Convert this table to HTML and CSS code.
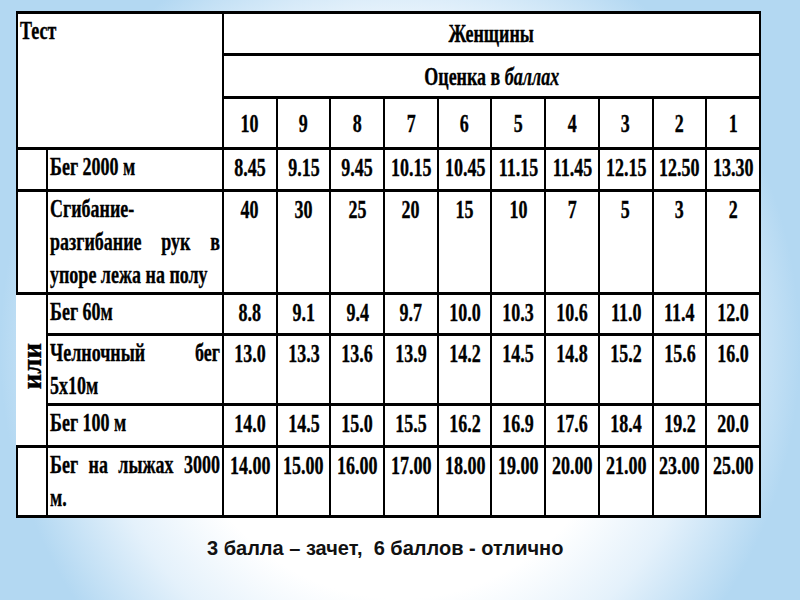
FILE: index.html
```html
<!DOCTYPE html>
<html lang="ru">
<head>
<meta charset="utf-8">
<title>Нормативы</title>
<link rel="stylesheet" href="styles.css">
</head>
<body>
<main class="slide">
  <table class="norms">
    <colgroup>
      <col class="c-or"><col class="c-name">
      <col class="c-val"><col class="c-val"><col class="c-val"><col class="c-val"><col class="c-val">
      <col class="c-val"><col class="c-val"><col class="c-val"><col class="c-val"><col class="c-val">
    </colgroup>
    <tr class="r-h1">
      <td class="test" colspan="2" rowspan="3"><div class="sq"><div>Тест</div></div></td>
      <td class="hd" colspan="10"><div class="ctr"><span class="c">Женщины</span></div></td>
    </tr>
    <tr class="r-h2">
      <td class="hd" colspan="10"><div class="ctr"><span class="c">Оценка в <i>баллах</i></span></div></td>
    </tr>
    <tr class="r-h3 pts">
      <td><div class="ctr"><span class="c">10</span></div></td>
      <td><div class="ctr"><span class="c">9</span></div></td>
      <td><div class="ctr"><span class="c">8</span></div></td>
      <td><div class="ctr"><span class="c">7</span></div></td>
      <td><div class="ctr"><span class="c">6</span></div></td>
      <td><div class="ctr"><span class="c">5</span></div></td>
      <td><div class="ctr"><span class="c">4</span></div></td>
      <td><div class="ctr"><span class="c">3</span></div></td>
      <td><div class="ctr"><span class="c">2</span></div></td>
      <td><div class="ctr"><span class="c">1</span></div></td>
    </tr>
    <tr class="r-1">
      <td class="side"></td>
      <td class="nm"><div class="sq"><div>Бег 2000 м</div></div></td>
      <td><div class="ctr"><span class="c">8.45</span></div></td>
      <td><div class="ctr"><span class="c">9.15</span></div></td>
      <td><div class="ctr"><span class="c">9.45</span></div></td>
      <td><div class="ctr"><span class="c">10.15</span></div></td>
      <td><div class="ctr"><span class="c">10.45</span></div></td>
      <td><div class="ctr"><span class="c">11.15</span></div></td>
      <td><div class="ctr"><span class="c">11.45</span></div></td>
      <td><div class="ctr"><span class="c">12.15</span></div></td>
      <td><div class="ctr"><span class="c">12.50</span></div></td>
      <td><div class="ctr"><span class="c">13.30</span></div></td>
    </tr>
    <tr class="r-2">
      <td class="side"></td>
      <td class="nm"><div class="sq"><div>Сгибание-</div><div class="j">разгибание рук в</div><div>упоре лежа на полу</div></div></td>
      <td><div class="ctr"><span class="c">40</span></div></td>
      <td><div class="ctr"><span class="c">30</span></div></td>
      <td><div class="ctr"><span class="c">25</span></div></td>
      <td><div class="ctr"><span class="c">20</span></div></td>
      <td><div class="ctr"><span class="c">15</span></div></td>
      <td><div class="ctr"><span class="c">10</span></div></td>
      <td><div class="ctr"><span class="c">7</span></div></td>
      <td><div class="ctr"><span class="c">5</span></div></td>
      <td><div class="ctr"><span class="c">3</span></div></td>
      <td><div class="ctr"><span class="c">2</span></div></td>
    </tr>
    <tr class="r-3">
      <td class="side ili" rowspan="3"><span class="vert">или</span></td>
      <td class="nm"><div class="sq"><div>Бег 60м</div></div></td>
      <td><div class="ctr"><span class="c">8.8</span></div></td>
      <td><div class="ctr"><span class="c">9.1</span></div></td>
      <td><div class="ctr"><span class="c">9.4</span></div></td>
      <td><div class="ctr"><span class="c">9.7</span></div></td>
      <td><div class="ctr"><span class="c">10.0</span></div></td>
      <td><div class="ctr"><span class="c">10.3</span></div></td>
      <td><div class="ctr"><span class="c">10.6</span></div></td>
      <td><div class="ctr"><span class="c">11.0</span></div></td>
      <td><div class="ctr"><span class="c">11.4</span></div></td>
      <td><div class="ctr"><span class="c">12.0</span></div></td>
    </tr>
    <tr class="r-4">
      <td class="nm"><div class="sq"><div class="j">Челночный бег</div><div>5х10м</div></div></td>
      <td><div class="ctr"><span class="c">13.0</span></div></td>
      <td><div class="ctr"><span class="c">13.3</span></div></td>
      <td><div class="ctr"><span class="c">13.6</span></div></td>
      <td><div class="ctr"><span class="c">13.9</span></div></td>
      <td><div class="ctr"><span class="c">14.2</span></div></td>
      <td><div class="ctr"><span class="c">14.5</span></div></td>
      <td><div class="ctr"><span class="c">14.8</span></div></td>
      <td><div class="ctr"><span class="c">15.2</span></div></td>
      <td><div class="ctr"><span class="c">15.6</span></div></td>
      <td><div class="ctr"><span class="c">16.0</span></div></td>
    </tr>
    <tr class="r-5">
      <td class="nm"><div class="sq"><div>Бег 100 м</div></div></td>
      <td><div class="ctr"><span class="c">14.0</span></div></td>
      <td><div class="ctr"><span class="c">14.5</span></div></td>
      <td><div class="ctr"><span class="c">15.0</span></div></td>
      <td><div class="ctr"><span class="c">15.5</span></div></td>
      <td><div class="ctr"><span class="c">16.2</span></div></td>
      <td><div class="ctr"><span class="c">16.9</span></div></td>
      <td><div class="ctr"><span class="c">17.6</span></div></td>
      <td><div class="ctr"><span class="c">18.4</span></div></td>
      <td><div class="ctr"><span class="c">19.2</span></div></td>
      <td><div class="ctr"><span class="c">20.0</span></div></td>
    </tr>
    <tr class="r-6">
      <td class="side"></td>
      <td class="nm"><div class="sq"><div class="j">Бег на лыжах 3000</div><div>м.</div></div></td>
      <td><div class="ctr"><span class="c">14.00</span></div></td>
      <td><div class="ctr"><span class="c">15.00</span></div></td>
      <td><div class="ctr"><span class="c">16.00</span></div></td>
      <td><div class="ctr"><span class="c">17.00</span></div></td>
      <td><div class="ctr"><span class="c">18.00</span></div></td>
      <td><div class="ctr"><span class="c">19.00</span></div></td>
      <td><div class="ctr"><span class="c">20.00</span></div></td>
      <td><div class="ctr"><span class="c">21.00</span></div></td>
      <td><div class="ctr"><span class="c">23.00</span></div></td>
      <td><div class="ctr"><span class="c">25.00</span></div></td>
    </tr>
  </table>
  <p class="note">3 балла – зачет,&nbsp; 6 баллов - отлично</p>
</main>
</body>
</html>
```

FILE: styles.css
```css
* { box-sizing: border-box; }

html, body {
  margin: 0;
  height: 100%;
}

body {
  background: radial-gradient(ellipse 50% 72% at 50% 58%, #ffffff 0%, #ffffff 58%, #e4f1fb 78%, #b3d8f2 100%);
  font-family: "Liberation Serif", "Times New Roman", serif;
  color: #000;
}

.slide {
  width: 800px;
  height: 600px;
  padding: 11px 0 0 16px;
}

.norms {
  border-collapse: collapse;
  table-layout: fixed;
  width: 745px;
  background: #fff;
}

.c-or { width: 30px; }
.c-name { width: 176px; }
.c-val { width: 53.7px; }

.norms td {
  border-top: 3px solid #000;
  border-bottom: 3px solid #000;
  border-left: 2px solid #000;
  border-right: 2px solid #000;
  padding: 0 2px;
  font-size: 25px;
  font-weight: 700;
  line-height: 33px;
  vertical-align: top;
  overflow: visible;
  -webkit-text-stroke: 0.35px #000;
}

.r-h1 { height: 42px; }
.r-h2 { height: 43px; }
.r-h3 { height: 51px; }
.r-1 { height: 42px; }
.r-2 { height: 103px; }
.r-3 { height: 41px; }
.r-4 { height: 70px; }
.r-5 { height: 42px; }
.r-6 { height: 70px; }

.norms .hd,
.norms .pts td { vertical-align: middle; }

.nm { padding-top: 1px; }

.ctr {
  display: flex;
  justify-content: center;
  padding-top: 1px;
}

.pts .ctr,
.hd .ctr { padding-top: 0; }

.c {
  display: inline-block;
  white-space: nowrap;
  transform: scaleX(0.72);
}

.sq {
  width: calc(100% / 0.72);
  transform: scaleX(0.72);
  transform-origin: left top;
  white-space: nowrap;
}

.j {
  text-align: justify;
  text-align-last: justify;
}

.test { padding: 0 3px; }

.norms .ili {
  border-left: none;
  vertical-align: middle;
  text-align: center;
  padding: 0;
}

.vert {
  display: inline-block;
  writing-mode: vertical-rl;
  transform: rotate(180deg);
  font-size: 27px;
  line-height: 28px;
}

.note {
  margin: 19px 0 0 191px;
  font-family: "Liberation Sans", Arial, sans-serif;
  font-weight: 700;
  font-size: 20px;
  color: #111;
  white-space: pre;
}
```
